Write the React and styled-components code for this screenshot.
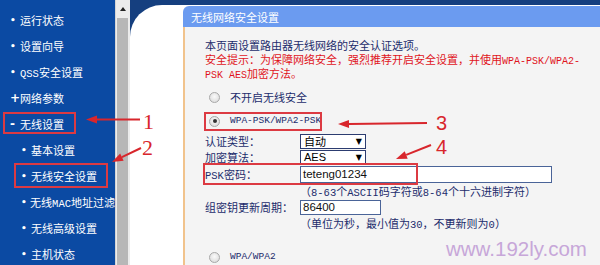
import React from 'react'
import styled, { createGlobalStyle } from 'styled-components'

const GlobalStyle = createGlobalStyle`
  html, body { margin: 0; padding: 0; }
  body {
    width: 600px;
    height: 265px;
    overflow: hidden;
    font-family: "Noto Sans CJK SC", "DejaVu Sans", sans-serif;
    font-size: 11px;
  }
`

const Page = styled.div`
  position: relative;
  display: flex;
  width: 600px;
  height: 265px;
  overflow: hidden;
`

const Sidebar = styled.div`
  width: 115px;
  background: #0b4aa3;
  padding-top: 7px;
  overflow: hidden;
  box-sizing: border-box;
`

const MenuItem = styled.div`
  height: 26px;
  display: flex;
  align-items: center;
  padding-left: ${p => (p.$level ? 21 : 10)}px;
  color: #fff;
  white-space: nowrap;
`

const MenuText = styled.span`
  line-height: 14px;
`

const Bullet = styled.span`
  width: 10px;
  font-size: ${p => (p.$kind === 'dot' ? 9 : 12)}px;
  font-family: "DejaVu Sans", sans-serif;
  font-weight: bold;
  line-height: 1;
`

const Latin = styled.span`
  font-family: "Liberation Mono", monospace;
  font-size: ${p => p.$size || 10.5}px;
  line-height: 1;
`

const Scroll = styled.div`
  width: 15px;
  background: #ececec;
  border-left: 1px solid #d4d4d4;
  box-sizing: border-box;
  display: flex;
  flex-direction: column;
`

const ScrollUp = styled.div`
  height: 17px;
  display: flex;
  align-items: center;
  justify-content: center;
  &::before {
    content: '';
    border-left: 3px solid transparent;
    border-right: 3px solid transparent;
    border-bottom: 4px solid #222;
  }
`

const Thumb = styled.div`
  flex: 1;
  margin: 1px 2px 0 1px;
  background: #b7b7b7;
`

const Main = styled.div`
  flex: 1;
  background: #153f7f;
  display: flex;
  flex-direction: column;
`

const Sheet = styled.div`
  flex: 1;
  margin-top: 5px;
  background: #fff;
  border-top-left-radius: 32px;
  padding: 1px 0 0 53px;
  display: flex;
  flex-direction: column;
`

const PanelHead = styled.div`
  height: 21px;
  background: #6b9bf0;
  border-top-left-radius: 6px;
  color: #fff;
  padding-left: 8px;
  display: flex;
  align-items: center;
`

const PanelBody = styled.div`
  flex: 1;
  background: #f4f4f4;
  border-left: 2px solid #f1c38c;
  padding: 11px 0 0 20px;
`

const Para = styled.div`
  height: 14px;
  line-height: 14px;
  color: ${p => (p.$warn ? '#e0141c' : '#1c2c6c')};
  white-space: nowrap;
`

const RadioRow = styled.div`
  height: 18px;
  margin-top: ${p => p.$gap || 0}px;
  display: flex;
  align-items: center;
  color: #1c2c6c;
  white-space: nowrap;
`

const Radio = styled.span`
  width: 9px;
  height: 9px;
  margin: 0 10px 0 4px;
  border-radius: 50%;
  border: 1px solid #a8a8a8;
  background: radial-gradient(circle at 50% 40%, #fafafa, #d6d6d6);
  display: flex;
  align-items: center;
  justify-content: center;
  &::after {
    content: '';
    width: 4px;
    height: 4px;
    border-radius: 50%;
    background: ${p => (p.$checked ? '#333' : 'transparent')};
  }
`

const Form = styled.div`
  margin-top: 3px;
  display: grid;
  grid-template-columns: 95px 1fr;
  color: #1c2c6c;
`

const Label = styled.div`
  height: ${p => p.$h}px;
  line-height: ${p => p.$h}px;
  white-space: nowrap;
`

const Cell = styled.div`
  height: ${p => p.$h}px;
  display: flex;
  align-items: center;
`

const Hint = styled.div`
  height: ${p => p.$h}px;
  line-height: ${p => p.$h}px;
  white-space: nowrap;
`

const Select = styled.div`
  width: 66px;
  height: 15px;
  box-sizing: border-box;
  border: 1px solid #2c3c70;
  background: #fff;
  color: #000;
  display: flex;
  align-items: center;
  justify-content: space-between;
  padding: 0 3px;
  font-size: 11px;
  font-family: ${p => (p.$latin ? '"Liberation Sans", sans-serif' : 'inherit')};
  &::after {
    content: '▼';
    font-size: 8px;
    font-family: "DejaVu Sans", sans-serif;
  }
`

const Input = styled.div`
  width: ${p => p.$w}px;
  height: ${p => p.$h || 16}px;
  box-sizing: border-box;
  border: 1px solid #4a6498;
  background: #fff;
  color: #111;
  font-family: "Liberation Sans", Arial, sans-serif;
  font-size: 11.5px;
  padding-left: 2px;
  display: flex;
  align-items: center;
`

const Mark = styled.div`
  position: absolute;
  left: ${p => p.$x}px;
  top: ${p => p.$y}px;
  width: ${p => p.$w}px;
  height: ${p => p.$h}px;
  border: 2px solid #dc3a42;
  box-sizing: border-box;
  pointer-events: none;
`

const Num = styled.span`
  position: absolute;
  left: ${p => p.$x}px;
  top: ${p => p.$y}px;
  color: #d8262c;
  font-family: ${p => (p.$serif ? '"Liberation Serif", serif' : '"Liberation Sans", sans-serif')};
  font-size: ${p => (p.$serif ? 22 : 20)}px;
  line-height: 1;
`

const Arrows = styled.svg`
  position: absolute;
  left: 0;
  top: 0;
  pointer-events: none;
`

const Watermark = styled.span`
  position: absolute;
  left: 446px;
  top: 239px;
  color: #c7a7d9;
  font-family: "Liberation Sans", Arial, sans-serif;
  font-size: 20.5px;
  line-height: 1;
`

const menu = [
  { text: '运行状态', bullet: 'dot' },
  { text: '设置向导', bullet: 'dot' },
  { text: <><Latin>QSS</Latin>安全设置</>, bullet: 'dot' },
  { text: '网络参数', bullet: '+' },
  { text: '无线设置', bullet: '-' },
  { text: '基本设置', bullet: 'dot', level: 1 },
  { text: '无线安全设置', bullet: 'dot', level: 1 },
  { text: <>无线<Latin>MAC</Latin>地址过滤</>, bullet: 'dot', level: 1 },
  { text: '无线高级设置', bullet: 'dot', level: 1 },
  { text: '主机状态', bullet: 'dot', level: 1 },
]

const arrows = [
  { x1: 140, y1: 119.5, x2: 86, y2: 119.5 },
  { x1: 141, y1: 148, x2: 112, y2: 162 },
  { x1: 427, y1: 123, x2: 338, y2: 124 },
  { x1: 431, y1: 145, x2: 396, y2: 159 },
]

function Arrow({ x1, y1, x2, y2 }) {
  const a = Math.atan2(y2 - y1, x2 - x1)
  const len = 11
  const wide = 4
  const bx = x2 - Math.cos(a) * len
  const by = y2 - Math.sin(a) * len
  const px = -Math.sin(a) * wide
  const py = Math.cos(a) * wide
  return (
    <g>
      <line x1={x1} y1={y1} x2={bx} y2={by} stroke="#d8262c" strokeWidth="2" />
      <polygon points={`${x2},${y2} ${bx + px},${by + py} ${bx - px},${by - py}`} fill="#d8262c" />
    </g>
  )
}

export default function App() {
  return (
    <Page>
      <GlobalStyle />
      <Sidebar>
        {menu.map((m, i) => (
          <MenuItem key={i} $level={m.level}>
            <Bullet $kind={m.bullet}>{m.bullet === 'dot' ? '•' : m.bullet}</Bullet>
            <MenuText>{m.text}</MenuText>
          </MenuItem>
        ))}
      </Sidebar>
      <Scroll>
        <ScrollUp />
        <Thumb />
      </Scroll>
      <Main>
        <Sheet>
          <PanelHead>无线网络安全设置</PanelHead>
          <PanelBody>
            <Para>本页面设置路由器无线网络的安全认证选项。</Para>
            <Para $warn>安全提示：为保障网络安全，强烈推荐开启安全设置，并使用<Latin $size={10}>WPA-PSK/WPA2-</Latin></Para>
            <Para $warn><Latin $size={10}>PSK AES</Latin>加密方法。</Para>
            <RadioRow $gap={8}><Radio />不开启无线安全</RadioRow>
            <RadioRow $gap={6}><Radio $checked /><Latin $size={9.5}>WPA-PSK/WPA2-PSK</Latin></RadioRow>
            <Form>
              <Label $h={16}>认证类型：</Label>
              <Cell $h={16}><Select>自动</Select></Cell>
              <Label $h={16}>加密算法：</Label>
              <Cell $h={16}><Select $latin>AES</Select></Cell>
              <Label $h={18}><Latin>PSK</Latin>密码：</Label>
              <Cell $h={18}><Input $w={252} $h={17}>teteng01234</Input></Cell>
              <Label $h={16} />
              <Hint $h={16}>（<Latin>8-63</Latin>个<Latin>ASCII</Latin>码字符或<Latin>8-64</Latin>个十六进制字符）</Hint>
              <Label $h={16}>组密钥更新周期：</Label>
              <Cell $h={16}><Input $w={81} $h={15}>86400</Input></Cell>
              <Label $h={17} />
              <Hint $h={17}>（单位为秒，最小值为<Latin>30</Latin>，不更新则为<Latin>0</Latin>）</Hint>
            </Form>
            <RadioRow $gap={16}><Radio /><Latin $size={9.5}>WPA/WPA2</Latin></RadioRow>
          </PanelBody>
        </Sheet>
      </Main>

      <Watermark>www.192ly.com</Watermark>
      <Mark $x={3} $y={112} $w={73} $h={22} />
      <Mark $x={14} $y={163} $w={94} $h={25} />
      <Mark $x={204} $y={112} $w={118} $h={19} />
      <Mark $x={203} $y={163} $w={215} $h={22} />
      <Arrows width="600" height="265" viewBox="0 0 600 265">
        {arrows.map((a, i) => <Arrow key={i} {...a} />)}
      </Arrows>
      <Num $x={143} $y={111} $serif>1</Num>
      <Num $x={142} $y={137} $serif>2</Num>
      <Num $x={436} $y={113}>3</Num>
      <Num $x={436} $y={137}>4</Num>
    </Page>
  )
}
